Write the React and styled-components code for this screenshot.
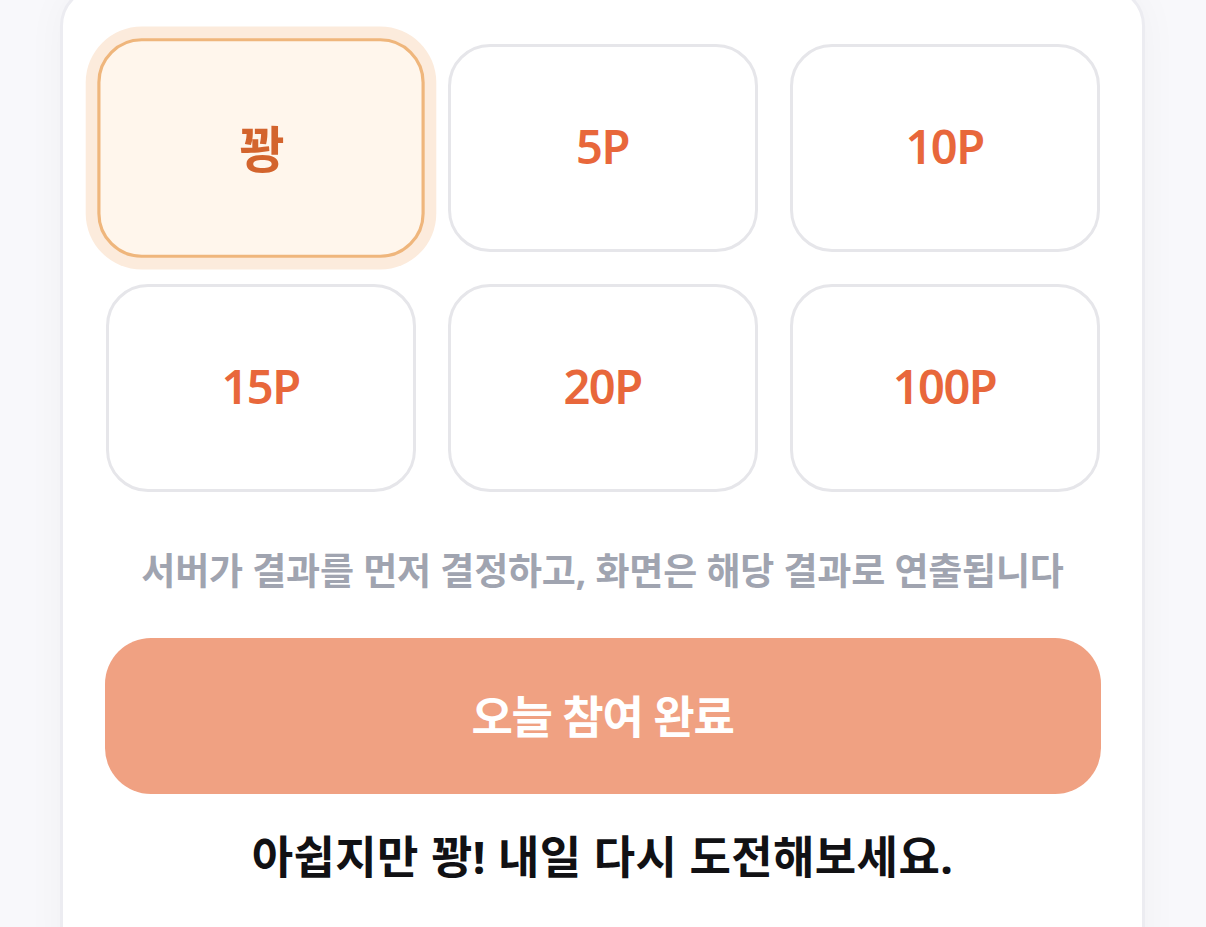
import React from 'react'
import styled, { createGlobalStyle } from 'styled-components'

const GlobalStyle = createGlobalStyle`
  html, body {
    margin: 0;
    padding: 0;
    background: #f8f8fb;
    font-family: "Noto Sans", "Noto Sans CJK KR", sans-serif;
  }
`

const prizes = ['꽝', '5P', '10P', '15P', '20P', '100P']

function App() {
  const selected = 0
  return (
    <Page>
      <GlobalStyle />
      <Card>
        <PrizeGrid>
          {prizes.map((p, i) => (
            <PrizeCell key={p} active={i === selected}>
              {p}
            </PrizeCell>
          ))}
        </PrizeGrid>
        <Caption>서버가 결과를 먼저 결정하고, 화면은 해당 결과로 연출됩니다</Caption>
        <DoneButton disabled>오늘 참여 완료</DoneButton>
        <ResultText>아쉽지만 꽝! 내일 다시 도전해보세요.</ResultText>
      </Card>
    </Page>
  )
}

export default App

const Page = styled.div`
  width: 1206px;
  height: 927px;
  overflow: hidden;
  padding-left: 60px;
  box-sizing: border-box;
`
const Card = styled.div`
  width: 1085px;
  height: 1000px;
  margin-top: -14px;
  box-sizing: border-box;
  background: #ffffff;
  border: 3px solid #ececf1;
  border-radius: 40px;
  box-shadow: 0 0 40px rgba(30, 30, 60, 0.035);
  padding: 55px 43px 0;
  display: flex;
  flex-direction: column;
  align-items: center;
`
const PrizeGrid = styled.div`
  display: grid;
  grid-template-columns: repeat(3, 310px);
  grid-auto-rows: 208px;
  gap: 32px;
`
const PrizeCell = styled.div`
  box-sizing: border-box;
  display: flex;
  align-items: center;
  justify-content: center;
  border-radius: 42px;
  border: 3px solid ${p => (p.active ? '#efb67c' : '#e6e6ea')};
  background: ${p => (p.active ? '#fff6ec' : '#ffffff')};
  color: ${p => (p.active ? '#d3642d' : '#e8673b')};
  box-shadow: ${p => (p.active ? '0 0 0 11px #fcebdc' : 'none')};
  transform: ${p => (p.active ? 'scale(1.056)' : 'none')};
  font-size: 47px;
  font-weight: 600;
  letter-spacing: -1.5px;
  padding-bottom: 4px;
`
const Caption = styled.p`
  margin: 56px 0 0;
  font-size: 37px;
  line-height: 46px;
  font-weight: 700;
  letter-spacing: -0.2px;
  color: #a0a4b0;
  text-align: center;
  white-space: nowrap;
`
const DoneButton = styled.button`
  margin-top: 44px;
  width: 996px;
  height: 156px;
  flex-shrink: 0;
  border: none;
  border-radius: 46px;
  background: #f0a182;
  color: #ffffff;
  font-family: inherit;
  font-size: 45px;
  font-weight: 700;
  letter-spacing: -1.2px;
  padding-bottom: 4px;
`
const ResultText = styled.p`
  margin: 36px 0 0;
  font-size: 45px;
  line-height: 54px;
  font-weight: 700;
  letter-spacing: 0.4px;
  color: #111114;
  text-align: center;
  white-space: nowrap;
`
